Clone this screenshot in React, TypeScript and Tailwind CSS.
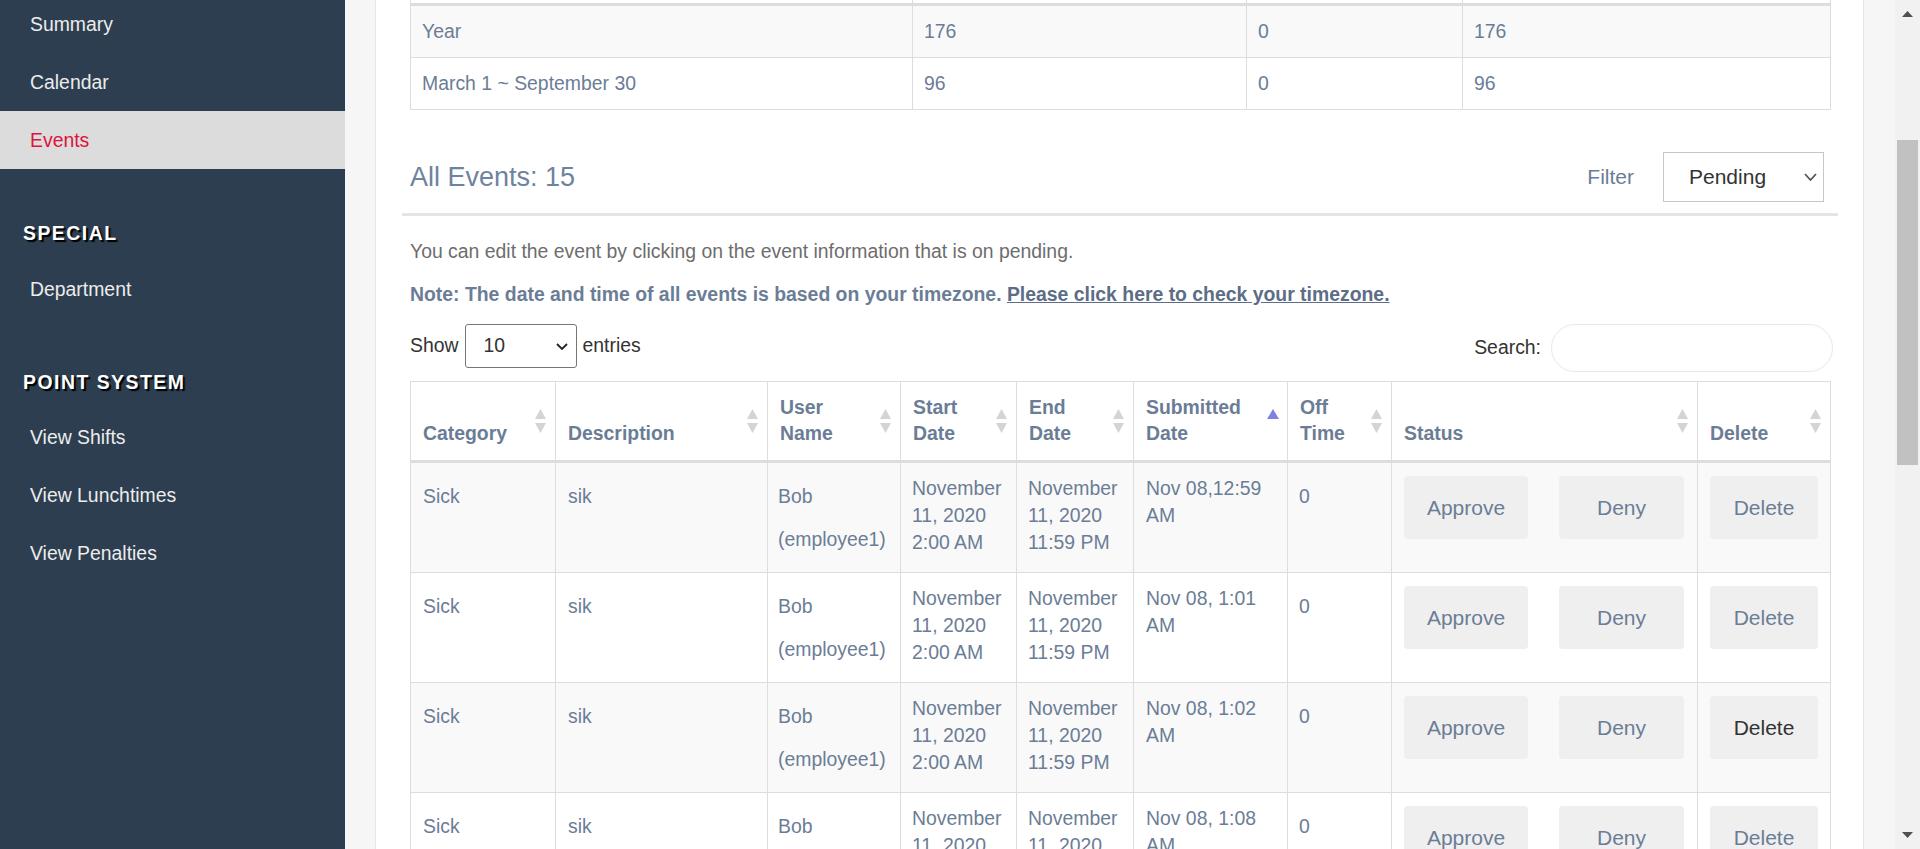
import React from "react";

const SLATE = "text-[#6b7d96]";

function NavItem({ label, active }: { label: string; active?: boolean }) {
  return (
    <div
      className={
        "flex h-[58px] items-center pl-[30px] pt-[1px] text-[19.4px] " +
        (active ? "bg-[#dcdcdc] text-[#dc143c]" : "text-[#ececec]")
      }
    >
      {label}
    </div>
  );
}

function NavHeading({ label, h }: { label: string; h: string }) {
  return (
    <div className={h + " pl-[23px] pt-[53px]"}>
      <div className="text-[19.4px] font-bold leading-[22px] tracking-[1.5px] text-white [text-shadow:2px_2px_1px_#000]">
        {label}
      </div>
    </div>
  );
}

function SortIcon() {
  return (
    <svg
      width="11"
      height="24"
      viewBox="0 0 11 24"
      className="absolute right-[9px] top-1/2 -translate-y-1/2"
    >
      <polygon points="5.5,0 11,10 0,10" fill="#d4d4d4" />
      <polygon points="0,14 11,14 5.5,24" fill="#d4d4d4" />
    </svg>
  );
}

function ActiveSortIcon() {
  return (
    <svg width="12" height="10" viewBox="0 0 12 10" className="absolute right-[8px] top-[27px]">
      <polygon points="6,0 12,10 0,10" fill="#7f83e0" />
    </svg>
  );
}

function Chevron({ w, h, color }: { w: number; h: number; color: string }) {
  return (
    <svg width={w} height={h} viewBox={`0 0 ${w} ${h}`}>
      <polyline
        points={`1,1 ${w / 2},${h - 1} ${w - 1},1`}
        fill="none"
        stroke={color}
        strokeWidth="1.8"
      />
    </svg>
  );
}

const GRID =
  "grid grid-cols-[145px_212px_133px_116px_117px_154px_104px_306px_1fr]";

const headers: { lines: string[]; active?: boolean }[] = [
  { lines: ["Category"] },
  { lines: ["Description"] },
  { lines: ["User", "Name"] },
  { lines: ["Start", "Date"] },
  { lines: ["End", "Date"] },
  { lines: ["Submitted", "Date"], active: true },
  { lines: ["Off", "Time"] },
  { lines: ["Status"] },
  { lines: ["Delete"] },
];

const rows = [
  { sub: ["Nov 08,12:59", "AM"], darkDelete: false },
  { sub: ["Nov 08, 1:01", "AM"], darkDelete: false },
  { sub: ["Nov 08, 1:02", "AM"], darkDelete: true },
  { sub: ["Nov 08, 1:08", "AM"], darkDelete: false },
];

function Btn({ label, w, dark }: { label: string; w: string; dark?: boolean }) {
  return (
    <div
      className={
        w +
        " flex h-[63px] items-center justify-center rounded-[4px] bg-[#efefef] text-[21px] " +
        (dark ? "text-[#333333]" : SLATE)
      }
    >
      {label}
    </div>
  );
}

export default function App() {
  const cellB = "border-r border-[#dddddd]";
  return (
    <div className="flex h-[849px] w-[1920px] overflow-hidden font-['Liberation_Sans',Arial,sans-serif]">
      {/* Sidebar */}
      <aside className="h-full w-[345px] shrink-0 bg-[#2c3e50]">
        <div className="-mt-[5px]">
          <NavItem label="Summary" />
          <NavItem label="Calendar" />
          <NavItem label="Events" active />
        </div>
        <NavHeading label="SPECIAL" h="h-[91px]" />
        <NavItem label="Department" />
        <NavHeading label="POINT SYSTEM" h="h-[90px]" />
        <NavItem label="View Shifts" />
        <NavItem label="View Lunchtimes" />
        <NavItem label="View Penalties" />
      </aside>

      {/* Main */}
      <main className="h-full flex-1 overflow-hidden bg-[#f6f6f6] pl-[30px] pr-[31px]">
        <div className="h-full border-x border-[#e6e6e6] bg-white pl-[26px] pr-[25px] text-[19.4px]">
          {/* Top summary table (scrolled) */}
          <div className="pl-[8px] pr-[7px]">
            <div className={"border-x border-[#dddddd] " + SLATE}>
              <div className="grid h-[3px] grid-cols-[502px_334px_216px_1fr]">
                <div className={cellB} />
                <div className={cellB} />
                <div className={cellB} />
                <div />
              </div>
              <div className="h-[3px] bg-[#dddddd]" />
              {[
                ["Year", "176", "0", "176"],
                ["March 1 ~ September 30", "96", "0", "96"],
              ].map((r, i) => (
                <div
                  key={i}
                  className={
                    "grid h-[52px] grid-cols-[502px_334px_216px_1fr] border-b border-[#dddddd] " +
                    (i === 0 ? "bg-[#f9f9f9]" : "bg-white")
                  }
                >
                  {r.map((c, j) => (
                    <div
                      key={j}
                      className={
                        "flex items-center pl-[11px] " + (j < 3 ? cellB : "")
                      }
                    >
                      {c}
                    </div>
                  ))}
                </div>
              ))}
            </div>
          </div>

          {/* All Events header */}
          <div className="mt-[42px] border-b-[3px] border-[#e5e5e5] pb-[11px]">
            <div className="flex h-[50px] items-center justify-between pl-[8px] pr-[14px]">
              <div className="text-[27px] leading-none text-[#6d83a0]">All Events: 15</div>
              <div className="flex items-center gap-[29px]">
                <span className={"text-[21px] " + SLATE}>Filter</span>
                <div className="flex h-[50px] w-[161px] items-center justify-between border border-[#c6c6c6] pl-[25px] pr-[6px] text-[21px] text-[#333333]">
                  <span>Pending</span>
                  <Chevron w={13} h={8} color="#555555" />
                </div>
              </div>
            </div>
          </div>

          <div className="pl-[8px] pr-[7px]">
            <p className="mt-[22px] leading-[27px] text-[#6d6d6d]">
              You can edit the event by clicking on the event information that is on pending.
            </p>
            <p className={"mt-[16px] font-bold leading-[27px] " + SLATE}>
              Note: The date and time of all events is based on your timezone.{" "}
              <span className="text-[#5c6d85] underline">Please click here to check your timezone.</span>
            </p>

            <div className="mt-[16px] flex h-[48px] items-start justify-between">
              <div className="flex h-[44px] items-center gap-[6px] text-[#333333]">
                <span>Show</span>
                <div className="flex h-[44px] w-[112px] items-center justify-between rounded-[3px] border border-[#767676] pl-[18px] pr-[8px]">
                  <span>10</span>
                  <Chevron w={12} h={7} color="#222222" />
                </div>
                <span>entries</span>
              </div>
              <div className="-mr-[2px] flex h-[48px] items-center gap-[10px] text-[#333333]">
                <span>Search:</span>
                <div className="h-[48px] w-[282px] rounded-[24px] border border-[#e8e8e8]" />
              </div>
            </div>

            {/* Events table */}
            <div className={"mt-[9px] border-l border-r border-t border-[#dddddd] " + SLATE}>
              <div className={GRID + " h-[81px] border-b-[3px] border-[#dddddd]"}>
                {headers.map((h, i) => (
                  <div
                    key={i}
                    className={
                      "relative flex flex-col justify-end pb-[14px] pl-[12px] font-bold leading-[26px] " +
                      (i < headers.length - 1 ? cellB : "")
                    }
                  >
                    {h.lines.map((l) => (
                      <div key={l}>{l}</div>
                    ))}
                    {h.active ? <ActiveSortIcon /> : <SortIcon />}
                  </div>
                ))}
              </div>

              {rows.map((r, i) => (
                <div
                  key={i}
                  className={
                    GRID +
                    " h-[110px] border-b border-[#dddddd] " +
                    (i % 2 === 0 ? "bg-[#f9f9f9]" : "bg-white")
                  }
                >
                  <div className={cellB + " pl-[12px] pt-[12px] leading-[43px]"}>Sick</div>
                  <div className={cellB + " pl-[12px] pt-[12px] leading-[43px]"}>sik</div>
                  <div className={cellB + " pl-[10px] pt-[12px] leading-[43px]"}>
                    <div>Bob</div>
                    <div>(employee1)</div>
                  </div>
                  <div className={cellB + " whitespace-nowrap pl-[11px] pt-[12px] leading-[27px]"}>
                    <div>November</div>
                    <div>11, 2020</div>
                    <div>2:00 AM</div>
                  </div>
                  <div className={cellB + " whitespace-nowrap pl-[11px] pt-[12px] leading-[27px]"}>
                    <div>November</div>
                    <div>11, 2020</div>
                    <div>11:59 PM</div>
                  </div>
                  <div className={cellB + " whitespace-nowrap pl-[12px] pt-[12px] leading-[27px]"}>
                    <div>{r.sub[0]}</div>
                    <div>{r.sub[1]}</div>
                  </div>
                  <div className={cellB + " pl-[11px] pt-[12px] leading-[43px]"}>0</div>
                  <div className={cellB + " flex items-start justify-between pl-[12px] pr-[13px] pt-[13px]"}>
                    <Btn label="Approve" w="w-[124px]" />
                    <Btn label="Deny" w="w-[125px]" />
                  </div>
                  <div className="pl-[12px] pt-[13px]">
                    <Btn label="Delete" w="w-[108px]" dark={r.darkDelete} />
                  </div>
                </div>
              ))}
            </div>
          </div>
        </div>
      </main>

      {/* Scrollbar */}
      <div className="flex h-full w-[25px] shrink-0 flex-col bg-[#f1f1f1]">
        <div className="flex h-[17px] items-end justify-center">
          <svg width="11" height="6" viewBox="0 0 11 6">
            <polygon points="5.5,0 11,6 0,6" fill="#505050" />
          </svg>
        </div>
        <div className="h-[123px]" />
        <div className="mx-[2px] h-[325px] bg-[#c1c1c1]" />
        <div className="flex-1" />
        <div className="flex h-[17px] items-start justify-center">
          <svg width="11" height="6" viewBox="0 0 11 6">
            <polygon points="0,0 11,0 5.5,6" fill="#505050" />
          </svg>
        </div>
      </div>
    </div>
  );
}
